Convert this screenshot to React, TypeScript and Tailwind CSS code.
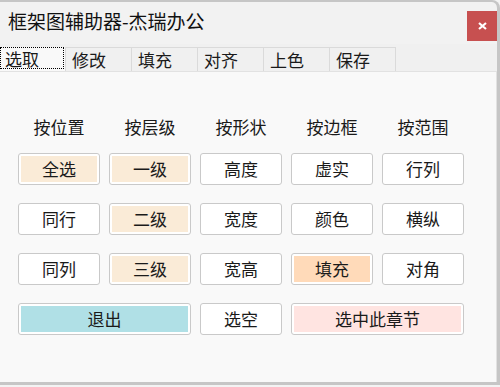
import React from 'react';

type Btn = { label: string; bg?: string; span?: boolean };

const rows: Btn[][] = [
  [{ label: '全选', bg: 'bg-[#faebd7]' }, { label: '一级', bg: 'bg-[#faebd7]' }, { label: '高度' }, { label: '虚实' }, { label: '行列' }],
  [{ label: '同行' }, { label: '二级', bg: 'bg-[#faebd7]' }, { label: '宽度' }, { label: '颜色' }, { label: '横纵' }],
  [{ label: '同列' }, { label: '三级', bg: 'bg-[#faebd7]' }, { label: '宽高' }, { label: '填充', bg: 'bg-[#ffdab9]' }, { label: '对角' }],
  [{ label: '退出', bg: 'bg-[#b0e0e6]', span: true }, { label: '选空' }, { label: '选中此章节', bg: 'bg-[#ffe4e1]', span: true }],
];

const headers = ['按位置', '按层级', '按形状', '按边框', '按范围'];
const tabs = ['修改', '填充', '对齐', '上色', '保存'];

function ToolButton({ label, bg, span }: Btn) {
  return (
    <div
      className={`${span ? 'col-span-2' : ''} h-[32px] rounded-[3px] border border-[#c9c9c9] bg-white p-[2px]`}
    >
      <div className={`flex h-full items-center justify-center ${bg ?? ''} text-[17px] text-[#1a1a1a]`}>
        {label}
      </div>
    </div>
  );
}

export default function App() {
  return (
    <div
      className="h-[387px] w-[500px] bg-[#f3f3f3]"
      style={{ fontFamily: '"Microsoft YaHei", "Noto Sans CJK SC", sans-serif' }}
    >
      <div className="flex h-[385px] w-[500px] flex-col rounded-tr-[8px] border-t-2 border-r-[3px] border-b-[3px] border-[#c6c6c6] bg-[#f2f2f2]">
        {/* title bar */}
        <div className="flex h-[42px] items-start justify-between">
          <div className="pl-[8px] pt-[6px] text-[19px] leading-[26px] text-[#111]">框架图辅助器-杰瑞办公</div>
          <div className="mt-[9px] flex h-[30px] w-[30px] items-center justify-center bg-[#c75050]">
            <svg width="9" height="8" viewBox="0 0 9 8">
              <path d="M1 1 L8 7 M8 1 L1 7" stroke="white" strokeWidth="2.2" />
            </svg>
          </div>
        </div>

        {/* tab strip */}
        <div className="flex h-[27px] items-end bg-[#f0f0f0]">
          <div className="flex h-[24px] w-[66px] items-start bg-[#f9f9f9]">
            <div className="flex h-[22px] w-[64px] items-center border border-dotted border-black pl-[4px] text-[17px] leading-none text-[#1a1a1a]">
              选取
            </div>
          </div>
          {tabs.map((t) => (
            <div
              key={t}
              className="-ml-px flex h-[24px] w-[67px] items-center border border-b-0 border-[#dadada] bg-[#f0f0f0] pl-[6px] text-[17px] leading-none text-[#1a1a1a]"
            >
              {t}
            </div>
          ))}
        </div>

        {/* content */}
        <div className="flex-1 border-t border-r border-[#e2e2e2] bg-[#f9f9f9] pt-[43px]">
          <div className="ml-[18px] grid w-[446px] grid-cols-5 gap-x-[9px]">
            {headers.map((h) => (
              <div key={h} className="text-center text-[17px] leading-[24px] text-[#1a1a1a]">
                {h}
              </div>
            ))}
          </div>
          <div className="ml-[18px] mt-[14px] grid w-[446px] grid-cols-5 gap-x-[9px] gap-y-[18px]">
            {rows.flat().map((b, i) => (
              <ToolButton key={i} {...b} />
            ))}
          </div>
        </div>
      </div>
    </div>
  );
}
